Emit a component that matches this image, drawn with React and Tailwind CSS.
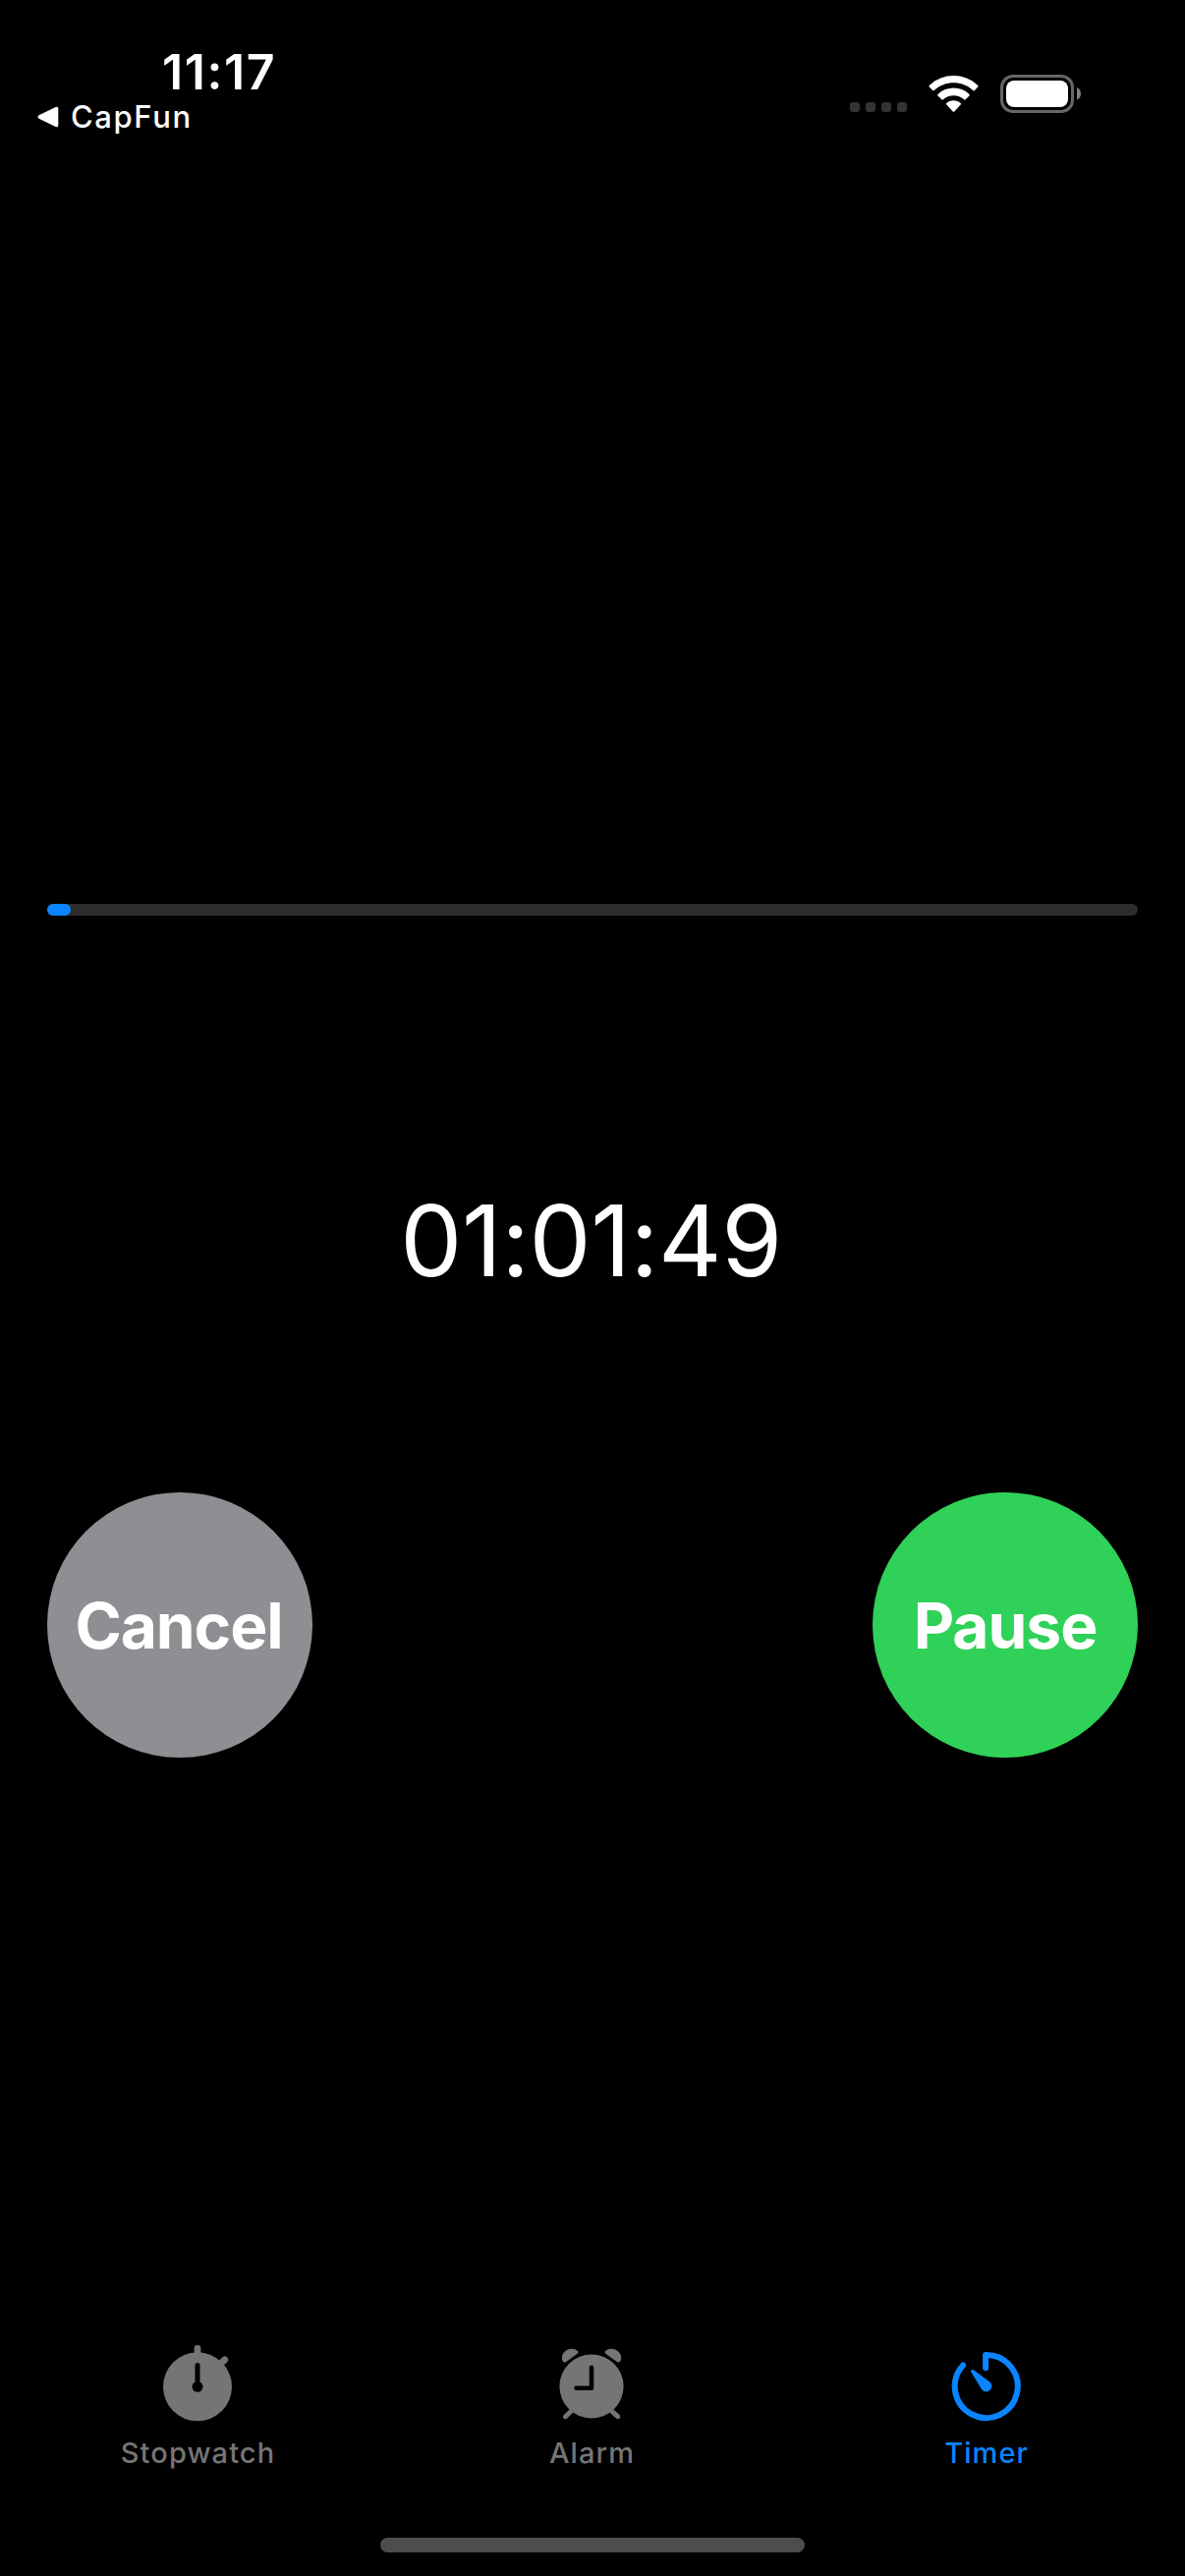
function StatusBar() {
  return (
    <header className="flex h-[150px] justify-between">
      <div className="flex flex-col pt-[43px]">
        <div className="h-[60px] pl-[165px] text-[50px] leading-[60px] font-semibold tracking-[1.6px]">11:17</div>
        <div className="flex h-[31px] items-center pl-[38px]">
          <svg className="h-[22px] w-[22px]" viewBox="0 0 22 22" fill="#fff">
            <path d="M1.6 9.2 L18.6 0.9 Q21.3 0 21.3 2.6 V19.4 Q21.3 22 18.6 21.1 L1.6 12.8 Q-0.6 11 1.6 9.2Z" />
          </svg>
          <span className="pl-[12px] text-[31px] leading-[31px] font-[450] tracking-[1.6px]">CapFun</span>
        </div>
      </div>
      <div className="flex pr-[106px]">
        <div className="flex gap-[6px] pt-[104px]">
          <i className="size-[10px] rounded-[3px] bg-[#333333]" />
          <i className="size-[10px] rounded-[3px] bg-[#333333]" />
          <i className="size-[10px] rounded-[3px] bg-[#333333]" />
          <i className="size-[10px] rounded-[3px] bg-[#333333]" />
        </div>
        <svg className="mt-[76px] ml-[22px] h-[39px] w-[51px]" viewBox="0 0 51 39" fill="#fff">
          <path d="M0.8 10.9 C14.5 -2.4 36.5 -2.4 50.2 10.9 Q51 11.7 50.2 12.5 L46.9 16 Q46.1 16.8 45.2 16 C34.2 5.7 16.8 5.7 5.8 16 Q4.9 16.8 4.1 16 L0.8 12.5 Q0 11.7 0.8 10.9Z" />
          <path d="M9.5 19.9 C18.3 11.4 32.7 11.4 41.5 19.9 Q42.3 20.7 41.5 21.5 L37.7 25.3 Q37 26 36.1 25.3 C30.2 19.9 20.8 19.9 14.9 25.3 Q14 26 13.3 25.3 L9.5 21.5 Q8.7 20.7 9.5 19.9Z" />
          <path d="M18.3 29 C22.4 25.3 28.6 25.3 32.7 29 Q33.5 29.8 32.7 30.6 L26.3 37.4 Q25.5 38.2 24.7 37.4 L18.3 30.6 Q17.5 29.8 18.3 29Z" />
        </svg>
        <div className="mt-[76px] ml-[22px] h-[39px] w-[75px] rounded-[13px] border-[3px] border-[#666666] p-[3px]">
          <div className="h-full w-full rounded-[8px] bg-white" />
        </div>
        <svg className="mt-[89px] ml-[3px] h-[13px] w-[4px]" viewBox="0 0 4 13" fill="#808080">
          <path d="M0 0.3 C5.3 2.5 5.3 10.5 0 12.7Z" />
        </svg>
      </div>
    </header>
  );
}

function StopwatchIcon() {
  return (
    <svg className="h-[80px] w-[80px]" viewBox="0 0 80 80">
      <circle cx="40" cy="42.3" r="35" fill="#757575" />
      <path d="M40 3.5 V12 M63.5 19 L67.8 14.8" stroke="#757575" strokeWidth="6.8" strokeLinecap="round" />
      <path d="M40 20.5 V42" stroke="#000" strokeWidth="5" strokeLinecap="round" />
      <circle cx="40" cy="42.3" r="5.5" fill="#000" />
    </svg>
  );
}

function AlarmIcon() {
  return (
    <svg className="h-[80px] w-[80px]" viewBox="0 0 80 80">
      <circle cx="40" cy="42" r="32.6" fill="#757575" />
      <path d="M19 67.5 L13.5 72.7 M61 67.5 L66.7 72.7" stroke="#757575" strokeWidth="5" strokeLinecap="round" />
      <path d="M14.2 16.9 Q12.3 18.2 10.7 16.5 C6.5 7.5 18.5 -0.5 26 6 Q27.2 7.5 25.5 8.8Z" fill="#757575" />
      <path d="M65.8 16.9 Q67.7 18.2 69.3 16.5 C73.5 7.5 61.5 -0.5 54 6 Q52.8 7.5 54.5 8.8Z" fill="#757575" />
      <path d="M40 22.8 V43.7 H24.5" stroke="#000" strokeWidth="4.6" strokeLinecap="round" strokeLinejoin="round" fill="none" />
    </svg>
  );
}

function TimerIcon() {
  return (
    <svg className="h-[80px] w-[80px]" viewBox="0 0 80 80">
      <g transform="translate(0.4 -0.3)">
        <path d="M39.7 23.5 V10.3 A32 32 0 1 1 16.7 20.7" stroke="#0a84ff" strokeWidth="6" strokeLinecap="round" strokeLinejoin="round" fill="none" />
        <path d="M26.5 25.2 Q25 25 24.7 26.5 L24.8 27.5 L35.3 44.5 A5.6 5.6 0 1 0 43.7 37.6 L27.5 25.5Z" fill="#0a84ff" />
      </g>
    </svg>
  );
}

function Tab({ icon, label, className }) {
  return (
    <button className={"flex w-[401px] flex-col items-center font-medium " + className}>
      {icon}
      <span className="mt-[14px] pl-[2px] text-[29px] leading-[32px] tracking-[1.1px]">{label}</span>
    </button>
  );
}

export default function App() {
  return (
    <div className="flex h-[2622px] w-[1206px] flex-col overflow-hidden bg-black font-['Inter',sans-serif] text-white">
      <StatusBar />
      <main className="flex h-[2237px] flex-col px-[48px] pt-[770px]">
        <div className="h-[12px] shrink-0 rounded-full bg-[#2c2c2e]">
          <div className="h-[12px] w-[24px] rounded-full bg-[#0a84ff]" />
        </div>
        <div className="mt-[271px] pr-[3px] text-center text-[100px] leading-[120px] tracking-[-0.4px]">01:01:49</div>
        <div className="mt-[196px] flex justify-between">
          <button className="size-[270px] rounded-full bg-[#8e8e93] pt-[2px] pr-[2px] text-[64px] leading-[64px] font-bold tracking-[-1.1px]">Cancel</button>
          <button className="size-[270px] rounded-full bg-[#30d158] pt-[2px] text-[64px] leading-[64px] font-bold tracking-[-1px]">Pause</button>
        </div>
      </main>
      <nav className="flex h-[196px] items-start">
        <Tab icon={<StopwatchIcon />} label="Stopwatch" className="text-[#757575]" />
        <Tab icon={<AlarmIcon />} label="Alarm" className="text-[#757575]" />
        <Tab icon={<TimerIcon />} label="Timer" className="pl-px text-[#0a84ff]" />
      </nav>
      <div className="mx-auto h-[15px] w-[432px] rounded-full bg-[#4d4d4d]" />
    </div>
  );
}
